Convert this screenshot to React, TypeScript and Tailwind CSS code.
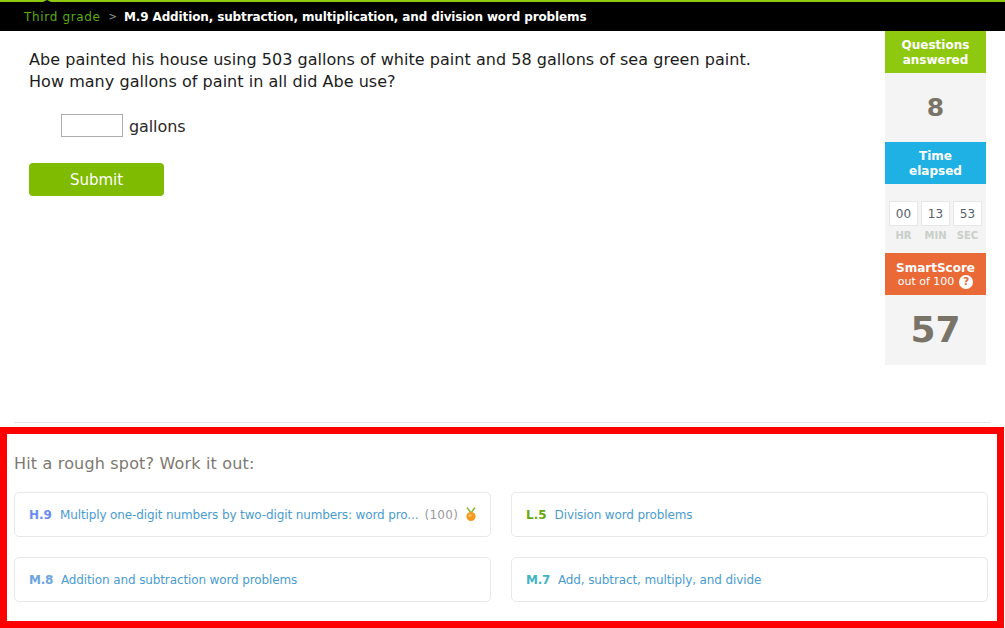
import React from "react";

const font = "font-['DejaVu_Sans','Verdana',sans-serif]";

const links = [
  { code: "H.9", color: "text-[#6b8cf0]", title: "Multiply one-digit numbers by two-digit numbers: word pro...", score: "(100)", medal: true },
  { code: "L.5", color: "text-[#6aa70a]", title: "Division word problems" },
  { code: "M.8", color: "text-[#6aa5e0] tracking-[-0.3px]", title: "Addition and subtraction word problems" },
  { code: "M.7", color: "text-[#45b3c4] tracking-[-0.3px]", title: "Add, subtract, multiply, and divide" },
];

const Medal = () => (
  <svg width="12" height="15" viewBox="0 0 12 15" className="ml-[7px]">
    <path d="M2 0.5 L6 6 L10 0.5" fill="none" stroke="#8dbb3c" strokeWidth="1.6" />
    <circle cx="6" cy="9.5" r="4.6" fill="#f39a1e" />
    <circle cx="5" cy="8.5" r="1.6" fill="#fbbf5a" />
  </svg>
);

const TimeBox = ({ value, label }: { value: string; label: string }) => (
  <div className="flex flex-col items-center w-[29px]">
    <div className="w-[29px] h-[25px] bg-white border-[1.5px] border-[#e6e6e6] flex items-center justify-center text-[12px] text-[#555f6b]">
      {value}
    </div>
    <span className="mt-[3px] text-[10px] leading-[14px] font-bold text-[#c8cec8]">{label}</span>
  </div>
);

const App: React.FC = () => {
  return (
    <div className={`w-[1005px] h-[628px] overflow-hidden bg-white relative ${font}`}>
      {/* Breadcrumb */}
      <div className="h-[31px] bg-black border-t-2 border-[#8fc910] flex items-center pl-[24px] text-[12px]">
        <span className="text-[#5aab10] tracking-[0.66px]">Third grade</span>
        <span className="text-[#999] text-[10px] ml-[8px] mr-[7px]">&gt;</span>
        <span className="text-white font-bold text-[12px] tracking-[-0.13px]">M.9 Addition, subtraction, multiplication, and division word problems</span>
      </div>
      <div className="absolute left-[41px] top-0 w-0 h-0 border-x-[6px] border-x-transparent border-b-[3px] border-b-black" />

      {/* Question area */}
      <div className="flex h-[392px]">
        <div className="flex-1 pl-[29px] pt-[18px]">
          <p className="text-[16px] leading-[22px] text-[#1c1c1c] tracking-[0.04px]">
            Abe painted his house using 503 gallons of white paint and 58 gallons of sea green paint.
            <br />
            How many gallons of paint in all did Abe use?
          </p>
          <div className="flex items-center mt-[21px] ml-[32px]">
            <div className="w-[62px] h-[23px] border border-[#adadad] bg-white" />
            <span className="ml-[6px] pt-[1px] text-[16px] leading-[19px] tracking-[-0.1px] text-[#2a2a2a]">gallons</span>
          </div>
          <button className="mt-[26px] w-[135px] h-[33px] pt-[1px] rounded-[4px] bg-[#7fbb00] text-white text-[15px]">
            Submit
          </button>
        </div>

        {/* Sidebar */}
        <div className="w-[101px] mr-[19px] h-[334px] bg-[#f4f4f4] flex flex-col">
          <div className="h-[42px] pt-[2px] bg-[#8fc90f] text-white font-bold text-[12px] leading-[15px] flex items-center justify-center text-center">
            Questions<br />answered
          </div>
          <div className="h-[69px] flex items-center justify-center text-[25px] font-bold text-[#7a7468]">8</div>
          <div className="h-[42px] pt-[2px] bg-[#1fb1e4] text-white font-bold text-[12px] leading-[15px] flex items-center justify-center text-center">
            Time<br />elapsed
          </div>
          <div className="h-[69px] flex justify-center gap-[3px] pt-[17px]">
            <TimeBox value="00" label="HR" />
            <TimeBox value="13" label="MIN" />
            <TimeBox value="53" label="SEC" />
          </div>
          <div className="h-[42px] pt-[1px] bg-[#e96a37] text-white flex flex-col items-center justify-center">
            <span className="font-bold text-[12px] leading-[15px] translate-y-[1px]">SmartScore</span>
            <span className="text-[11px] leading-[14px] flex items-center">
              out of 100
              <span className="ml-[5px] w-[14px] h-[14px] rounded-full bg-white text-[#e96a37] text-[11px] font-bold flex items-center justify-center">?</span>
            </span>
          </div>
          <div className="flex-1 flex items-center justify-center text-[36px] font-bold text-[#7a7468]">57</div>
        </div>
      </div>

      <div className="mx-[14px] h-[1px] bg-[#e6e6e6] -mt-[1px]" />

      {/* Rough spot panel */}
      <div className="mt-[4px] w-[1004px] h-[201px] border-[7px] border-[#ff0000] pl-[7px] pr-[9px] pt-[20px]">
        <h2 className="text-[16px] leading-[19px] font-normal tracking-[0.17px] text-[#7d7870]">Hit a rough spot? Work it out:</h2>
        <div className="mt-[19px] grid grid-cols-2 gap-x-[20px] gap-y-[20px]">
          {links.map((link) => (
            <div key={link.code} className="h-[45px] rounded-[5px] border border-[#e8e8e8] flex items-center pl-[14px] text-[12px] whitespace-nowrap">
              <span className={`font-bold text-[12px] ${link.color}`}>{link.code}</span>
              <span className="ml-[8px] text-[#4a9ccf] tracking-[-0.12px]">{link.title}</span>
              {link.score && <span className="ml-[6px] text-[#9a9a9a] tracking-[0.3px]">{link.score}</span>}
              {link.medal && <Medal />}
            </div>
          ))}
        </div>
      </div>
    </div>
  );
};

export default App;
